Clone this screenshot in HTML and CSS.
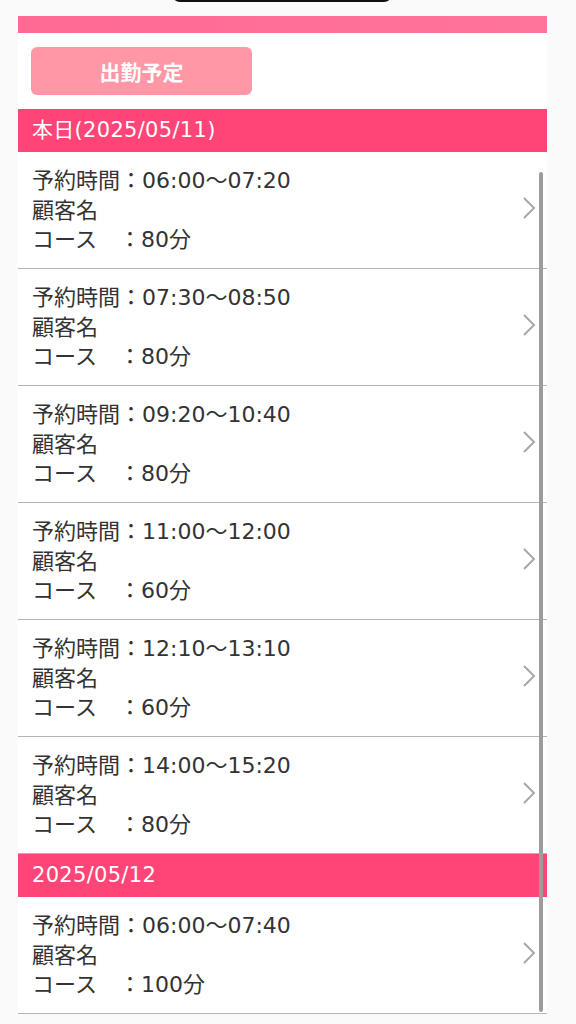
FILE: index.html
```html
<!DOCTYPE html>
<html lang="ja">
<head>
<meta charset="utf-8">
<link rel="stylesheet" href="styles.css">
</head>
<body>
<div class="notch"></div>
<div class="page">
  <div class="topbar"></div>
  <div class="tabs"><div class="tab-btn">出勤予定</div></div>

  <div class="day-header">本日(2025/05/11)</div>
  <div class="item">
    <div class="info"><div>予約時間：06:00〜07:20</div><div>顧客名</div><div>コース　：80分</div></div>
    <svg class="chev" viewBox="0 0 16 24" width="16" height="24"><path d="M3 2 L13 12 L3 22" fill="none" stroke="#a8a8a8" stroke-width="2"/></svg>
  </div>
  <div class="item">
    <div class="info"><div>予約時間：07:30〜08:50</div><div>顧客名</div><div>コース　：80分</div></div>
    <svg class="chev" viewBox="0 0 16 24" width="16" height="24"><path d="M3 2 L13 12 L3 22" fill="none" stroke="#a8a8a8" stroke-width="2"/></svg>
  </div>
  <div class="item">
    <div class="info"><div>予約時間：09:20〜10:40</div><div>顧客名</div><div>コース　：80分</div></div>
    <svg class="chev" viewBox="0 0 16 24" width="16" height="24"><path d="M3 2 L13 12 L3 22" fill="none" stroke="#a8a8a8" stroke-width="2"/></svg>
  </div>
  <div class="item">
    <div class="info"><div>予約時間：11:00〜12:00</div><div>顧客名</div><div>コース　：60分</div></div>
    <svg class="chev" viewBox="0 0 16 24" width="16" height="24"><path d="M3 2 L13 12 L3 22" fill="none" stroke="#a8a8a8" stroke-width="2"/></svg>
  </div>
  <div class="item">
    <div class="info"><div>予約時間：12:10〜13:10</div><div>顧客名</div><div>コース　：60分</div></div>
    <svg class="chev" viewBox="0 0 16 24" width="16" height="24"><path d="M3 2 L13 12 L3 22" fill="none" stroke="#a8a8a8" stroke-width="2"/></svg>
  </div>
  <div class="item">
    <div class="info"><div>予約時間：14:00〜15:20</div><div>顧客名</div><div>コース　：80分</div></div>
    <svg class="chev" viewBox="0 0 16 24" width="16" height="24"><path d="M3 2 L13 12 L3 22" fill="none" stroke="#a8a8a8" stroke-width="2"/></svg>
  </div>

  <div class="day-header">2025/05/12</div>
  <div class="item">
    <div class="info"><div>予約時間：06:00〜07:40</div><div>顧客名</div><div>コース　：100分</div></div>
    <svg class="chev" viewBox="0 0 16 24" width="16" height="24"><path d="M3 2 L13 12 L3 22" fill="none" stroke="#a8a8a8" stroke-width="2"/></svg>
  </div>
</div>
<div class="scrollbar"></div>
</body>
</html>
```
FILE: styles.css
```css
html, body {
  margin: 0;
  padding: 0;
}
body {
  background: #fafafa;
  font-family: "DejaVu Sans", "Noto Sans CJK JP", sans-serif;
  color: #333;
  height: 1024px;
  overflow: hidden;
  position: relative;
}
.notch {
  position: absolute;
  left: 172px;
  top: -6px;
  width: 220px;
  height: 8px;
  background: #111;
  border-radius: 0 0 8px 8px;
}
.page {
  margin-left: 18px;
  width: 529px;
  padding-top: 16px;
}
.topbar {
  height: 17px;
  background: linear-gradient(90deg, #ff6a92, #ff749a);
}
.tabs {
  background: #fff;
  padding: 14px 13px;
}
.tab-btn {
  width: 221px;
  height: 48px;
  background: #ff97a6;
  border-radius: 6px;
  color: #fff;
  font-family: "Noto Sans CJK JP", sans-serif;
  font-weight: 700;
  font-size: 21px;
  display: flex;
  align-items: center;
  justify-content: center;
}
.day-header {
  height: 43px;
  line-height: 43px;
  background: #ff4577;
  color: #fff;
  font-size: 21px;
  letter-spacing: 0.3px;
  padding-left: 14px;
}
.item {
  height: 116px;
  background: #fff;
  border-bottom: 1px solid #b4b4b4;
  display: flex;
  align-items: flex-start;
  justify-content: space-between;
  padding-left: 14px;
  padding-right: 10px;
}
.info {
  padding-top: 14px;
  font-size: 22px;
  line-height: 29.5px;
}
.chev {
  margin-top: 44px;
}
.scrollbar {
  position: absolute;
  left: 539px;
  top: 172px;
  width: 3.5px;
  height: 840px;
  background: #9c9c9c;
  border-radius: 2px;
}
```
